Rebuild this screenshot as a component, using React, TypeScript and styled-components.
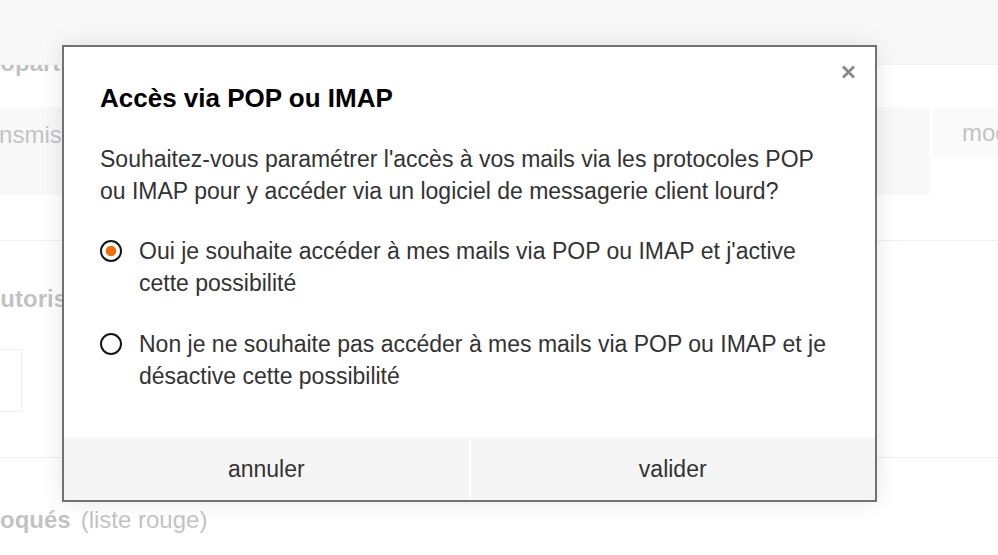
import React from 'react';
import styled, {createGlobalStyle} from 'styled-components';

const GlobalStyle = createGlobalStyle`
  html, body {
    margin: 0;
    padding: 0;
    background: #ffffff;
  }
  body {
    font-family: "Liberation Sans", Arial, Helvetica, sans-serif;
  }
`;

const Screen = styled.div`
  position: relative;
  width: 100%;
  height: 555px;
  overflow: hidden;
  background: #ffffff;
`;

/* page behind the dialog */
const TopBar = styled.div`
  position: absolute;
  top: 0;
  left: 0;
  right: 0;
  height: 64px;
  background: #e6e6e6;
  border-bottom: 1px solid #d8d8d8;
`;

const Content = styled.div`
  margin-left: -60px;
  width: 1160px;
  color: #333333;
  font-size: 24px;
`;

const Section = styled.section<{$top: number; $bordered?: boolean}>`
  padding-top: ${p => p.$top}px;
  padding-bottom: ${p => (p.$bordered ? 45 : 0)}px;
  border-bottom: ${p => (p.$bordered ? '1px solid #cdcdcd' : 'none')};
`;

const Heading = styled.h3<{$indent?: number}>`
  margin: 0;
  padding-left: ${p => p.$indent ?? 43}px;
  font-size: 24px;
  line-height: 28px;
  font-weight: bold;
  white-space: nowrap;

  > span {
    font-weight: normal;
    margin-left: 10px;
  }
`;

const Row = styled.div`
  margin-top: 30px;
  display: flex;
  align-items: flex-start;
  gap: 2px;
`;

const Card = styled.div`
  flex: 1;
  height: 88px;
  box-sizing: border-box;
  padding: 13px 24px;
  background: #e6e6e6;
  border-radius: 4px;
  line-height: 30px;
`;

const EditButton = styled.div`
  width: 168px;
  height: 50px;
  margin-top: 1px;
  box-sizing: border-box;
  padding-left: 30px;
  display: flex;
  align-items: center;
  background: #eeeeee;
  border-radius: 4px;
`;

const Field = styled.div`
  margin-top: 36px;
  width: 82px;
  height: 63px;
  box-sizing: border-box;
  border: 1px solid #cfcfcf;
  background: #ffffff;
`;

const Backdrop = styled.div`
  position: absolute;
  inset: 0;
  background: rgba(255, 255, 255, 0.7);
`;

/* dialog */
const Dialog = styled.div`
  position: absolute;
  left: 62px;
  top: 45px;
  width: 815px;
  box-sizing: border-box;
  background: #ffffff;
  border: 2px solid #727272;
  box-shadow: 0 0 22px rgba(0, 0, 0, 0.1);
`;

const CloseButton = styled.button`
  position: absolute;
  top: 18px;
  right: 18px;
  width: 17px;
  height: 15px;
  padding: 0;
  border: none;
  background: none;
  cursor: pointer;

  svg {
    display: block;
  }
`;

const Body = styled.div`
  padding: 35px 36px 46px;
`;

const Title = styled.h2`
  margin: 0;
  font-size: 26px;
  line-height: 32px;
  font-weight: bold;
  color: #000000;
`;

const Text = styled.p`
  margin: 29px 0 0;
  font-size: 23px;
  line-height: 32px;
  color: #333333;
`;

const Options = styled.div`
  margin-top: 28px;
  display: flex;
  flex-direction: column;
  gap: 29px;
`;

const Option = styled.label`
  display: flex;
  align-items: flex-start;
  gap: 17px;
  font-size: 23px;
  line-height: 32px;
  color: #333333;
  cursor: pointer;
`;

const Radio = styled.input.attrs({type: 'radio'})`
  appearance: none;
  flex-shrink: 0;
  width: 22px;
  height: 22px;
  margin: 5px 0 0;
  box-sizing: border-box;
  border: 2px solid #161616;
  border-radius: 50%;
  background: #ffffff;

  &:checked {
    background: radial-gradient(circle, #f16e00 0 4.8px, #ffffff 5.6px);
  }
`;

const Footer = styled.div`
  display: grid;
  grid-template-columns: 1fr 1fr;
  gap: 2px;
  background: #ffffff;
`;

const FooterButton = styled.button`
  height: 62px;
  border: none;
  background: #f5f5f5;
  font-family: inherit;
  font-size: 23px;
  color: #333333;
  cursor: pointer;
`;

const App: React.FC = () => {
  return (
    <Screen>
      <GlobalStyle/>
      <Content>
        <Section $top={49} $bordered>
          <Heading>Coparticipation</Heading>
          <Row>
            <Card>Transmission automatique des mails reçus</Card>
            <EditButton>modifier</EditButton>
          </Row>
        </Section>
        <Section $top={44} $bordered>
          <Heading>Autorisations</Heading>
          <Field/>
        </Section>
        <Section $top={48}>
          <Heading $indent={36}>Bloqués<span>(liste rouge)</span></Heading>
        </Section>
      </Content>
      <TopBar/>
      <Backdrop/>

      <Dialog role="dialog" aria-labelledby="pop-title">
        <CloseButton aria-label="fermer">
          <svg width="17" height="15" viewBox="0 0 17 15">
            <path d="M3 1.5 L14 12.5 M14 1.5 L3 12.5" stroke="#8c8c8c" strokeWidth="3" fill="none"/>
          </svg>
        </CloseButton>
        <Body>
          <Title id="pop-title">Accès via POP ou IMAP</Title>
          <Text>
            Souhaitez-vous paramétrer l'accès à vos mails via les protocoles POP ou IMAP pour y accéder
            via un logiciel de messagerie client lourd?
          </Text>
          <Options>
            <Option>
              <Radio name="pop" defaultChecked/>
              <span>Oui je souhaite accéder à mes mails via POP ou IMAP et j'active cette possibilité</span>
            </Option>
            <Option>
              <Radio name="pop"/>
              <span>Non je ne souhaite pas accéder à mes mails via POP ou IMAP et je désactive cette possibilité</span>
            </Option>
          </Options>
        </Body>
        <Footer>
          <FooterButton>annuler</FooterButton>
          <FooterButton>valider</FooterButton>
        </Footer>
      </Dialog>
    </Screen>
  );
};

export default App;
